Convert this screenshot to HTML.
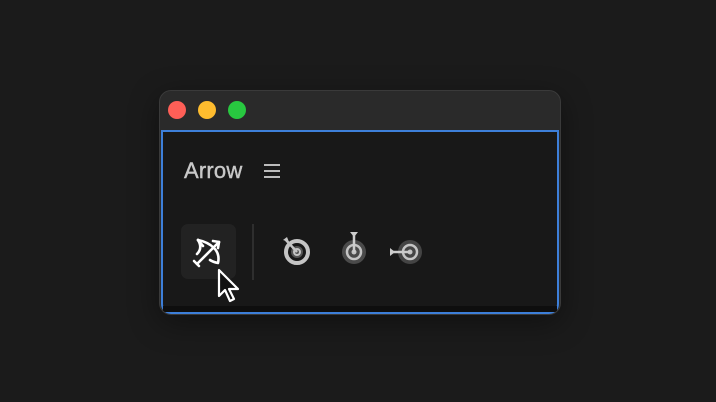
<!DOCTYPE html><html><head><style>
body{margin:0;width:716px;height:402px;background:#1b1b1b;position:relative;overflow:hidden;font-family:"Liberation Sans",sans-serif}
.win{position:absolute;left:159px;top:90px;width:402px;height:225px;border-radius:12px;background:#2a2a2a;border:1px solid #3a3a3a;box-sizing:border-box;overflow:hidden;box-shadow:0 8px 30px rgba(0,0,0,.4)}
.dot{position:absolute;top:10px;width:18px;height:18px;border-radius:50%}
.content{position:absolute;left:1px;top:39px;width:398px;height:184px;border:2px solid #3d7fd9;box-sizing:border-box;background:#181818;border-radius:0 0 10px 10px}
.strip{position:absolute;left:0;right:0;bottom:0;height:6px;background:#0e0e0e}
</style></head><body>
<div class="win">
<div class="dot" style="left:8px;background:#fe5f57"></div>
<div class="dot" style="left:38px;background:#febc2e"></div>
<div class="dot" style="left:68px;background:#28c840"></div>
<div class="content"><div class="strip"></div></div>
</div>
<div style="position:absolute;left:184px;top:158px;font-size:22px;color:#c8c8c8;letter-spacing:0.2px;-webkit-text-stroke:0.4px #c8c8c8">Arrow</div>
<svg style="position:absolute;left:262px;top:163px" width="20" height="16"><g stroke="#bbb" stroke-width="2"><line x1="2" y1="2" x2="18" y2="2"/><line x1="2" y1="8" x2="18" y2="8"/><line x1="2" y1="14" x2="18" y2="14"/></g></svg>
<div style="position:absolute;left:181px;top:224px;width:55px;height:55px;border-radius:7px;background:#222"></div>
<div style="position:absolute;left:252px;top:224px;width:2px;height:56px;background:#2e2e2e"></div>
<svg style="position:absolute;left:181px;top:224px" width="56" height="56"><g stroke="#fff" stroke-width="2.6" fill="none" stroke-linecap="round" stroke-linejoin="round">
<path d="M17 16 Q27 18 33 24 Q39 30 37 39 Q32 38 29 36"/>
<path d="M17 16 Q22 24 16 30"/>
<line x1="17" y1="16" x2="22" y2="22"/>
<line x1="16" y1="40" x2="38" y2="18"/><path d="M32 17 L38 18 L37 24"/><path d="M13 37 L18 42"/>
</g></svg>
<svg style="position:absolute;left:280px;top:234px" width="36" height="36"><circle cx="17" cy="18" r="11" fill="none" stroke="#c4c4c4" stroke-width="4"/><circle cx="17" cy="18" r="6" fill="#555"/><circle cx="17" cy="18" r="3" fill="none" stroke="#c4c4c4" stroke-width="2"/><line x1="5" y1="5" x2="17" y2="18" stroke="#c4c4c4" stroke-width="2.5"/><path d="M3 6 L7 3 L9 8 Z" fill="#c4c4c4"/></svg>
<svg style="position:absolute;left:337px;top:230px" width="36" height="40"><circle cx="17" cy="22" r="12" fill="#4a4a4a"/><circle cx="17" cy="22" r="7" fill="none" stroke="#c4c4c4" stroke-width="2.5"/><circle cx="17" cy="22" r="2.5" fill="#c4c4c4"/><line x1="17" y1="4" x2="17" y2="22" stroke="#ccc" stroke-width="2.5"/><path d="M13 2 L17 7 L21 2 Z" fill="#ccc"/></svg>
<svg style="position:absolute;left:388px;top:234px" width="40" height="36"><circle cx="22" cy="18" r="12" fill="#444"/><circle cx="22" cy="18" r="7" fill="none" stroke="#c4c4c4" stroke-width="2.5"/><circle cx="22" cy="18" r="2.5" fill="#c4c4c4"/><line x1="4" y1="18" x2="22" y2="18" stroke="#ccc" stroke-width="2.5"/><path d="M2 14 L7 18 L2 22 Z" fill="#ccc"/></svg>
<svg style="position:absolute;left:217px;top:268px" width="28" height="40"><path d="M2 2 L2 28 L8 22 L13 33 L17 31 L12 21 L21 21 Z" fill="#111" stroke="#fff" stroke-width="2.2" stroke-linejoin="round"/></svg>
</body></html>
